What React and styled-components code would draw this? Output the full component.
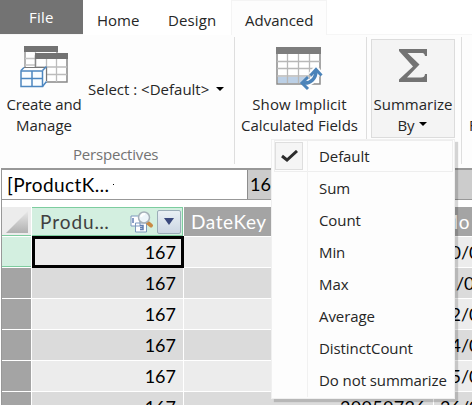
import React from "react";
import styled, { createGlobalStyle } from "styled-components";

const Global = createGlobalStyle`
  * { box-sizing: border-box; }
  body { margin: 0; overflow: hidden; background: #fff; }
`;

const Window = styled.div`
  position: relative;
  width: 472px;
  height: 405px;
  overflow: hidden;
  font: 15px/21px "Open Sans", "Noto Sans", sans-serif;
  color: #262626;
  background: #fff;
  white-space: nowrap;
`;

const Text = styled.span`
  font-size: ${(p) => p.$size || 15}px;
  letter-spacing: ${(p) => p.$track || 0}px;
`;

const TabBar = styled.nav`
  display: flex;
  height: 34px;
  background: #fff;
`;

const Tab = styled.div`
  width: ${(p) => p.$width}px;
  height: 35px;
  padding: 9px 0 0 ${(p) => p.$pad}px;
  background: ${(p) => (p.$active ? "#fdfdfd" : "#fff")};
  border: 1px solid ${(p) => (p.$active ? "#f4f4f4" : "#fff")};
  border-bottom: 0;
`;

const FileTab = styled.div`
  width: 83px;
  height: 34px;
  padding: 7px 0 0 29px;
  color: #fff;
  background: #737373;
`;

const Ribbon = styled.section`
  display: flex;
  height: 134px;
  background: #fdfdfd;
  border-top: 1px solid #f6f6f6;
`;

const Group = styled.div`
  width: ${(p) => p.$width}px;
  height: 127px;
  margin-top: 2px;
  flex: none;
  border-right: 1px solid #dedede;
`;

const GroupTools = styled.div`
  display: flex;
  height: 102px;
`;

const GroupName = styled.div`
  padding-left: 73px;
  margin-top: 5px;
  color: #737373;
`;

const Tool = styled.div`
  display: flex;
  flex-direction: column;
  align-items: center;
  width: ${(p) => p.$width}px;
  padding-top: 6px;
`;

const ToolIcon = styled.div`
  height: 51px;
  display: flex;
  align-items: flex-start;
  padding-top: ${(p) => p.$drop}px;
`;

const Selector = styled.div`
  display: flex;
  align-items: flex-start;
  padding-top: 42px;
`;

const Caret = styled.span`
  display: inline-block;
  width: 0;
  height: 0;
  margin: ${(p) => p.$margin || 0};
  border: 4px solid transparent;
  border-top-color: #000;
  border-bottom: 0;
`;

const SummaryButton = styled.div`
  width: 84px;
  height: 99px;
  margin: 2px 0 0 4px;
  display: flex;
  flex-direction: column;
  align-items: center;
  background: #f4f4f4;
  border: 1px solid #dcdcdc;
  padding-top: 3px;
`;

const ByLine = styled.div`
  display: flex;
  align-items: center;
  margin-left: -2px;
`;

const NextTool = styled.div`
  padding: 80px 0 0 7px;
`;

const FormulaBar = styled.div`
  display: flex;
  height: 32px;
  margin-left: 1px;
  border: 1px solid #989898;
  border-width: 2px 0 1px 1px;
  font: 18px/29px Lato, sans-serif;
  color: #000;
`;

const CellName = styled.div`
  width: 246px;
  padding-left: 5px;
  border-right: 1px solid #8d8d8d;
`;

const Dot = styled.span`
  display: inline-block;
  width: 1px;
  height: 1px;
  margin-left: 4px;
  vertical-align: 7px;
  background: #000;
`;

const Formula = styled.div`
  flex: 1;
  padding-left: 2px;
  background: #ccc;
`;

const Grid = styled.div`
  display: grid;
  grid-template-columns: 29px 151px 249px 38px;
  grid-template-rows: 29px;
  grid-auto-rows: 30px;
  gap: 1px;
  height: 205px;
  padding-top: 7px;
  margin-left: 1px;
  border-left: 1px solid #989898;
  background: #fff;
  font: 18px/31px Lato, sans-serif;
  color: #000;
`;

const Corner = styled.div`
  background: #ececec;
  border-bottom: 1px solid #7dcd9f;
  padding: 4px 3px;
  svg { display: block; }
`;

const ColumnHead = styled.div`
  display: flex;
  align-items: center;
  overflow: hidden;
  padding-left: ${(p) => (p.$selected ? 8 : 7)}px;
  color: ${(p) => (p.$selected ? "#404040" : "#fff")};
  background: ${(p) => (p.$selected ? "#d3efe0" : "#a4a4a4")};
  border: solid ${(p) => (p.$selected ? "#7dcd9f" : "#a4a4a4")};
  border-width: ${(p) => (p.$selected ? "1px 1px 1px 0" : "0")};
`;

const HeadName = styled.div`
  width: 90px;
  flex: none;
`;

const FilterButton = styled.div`
  width: 24px;
  height: 24px;
  margin-left: 3px;
  display: flex;
  align-items: center;
  justify-content: center;
  flex: none;
  border: 1px solid #9badb8;
  border-radius: 2px;
  background: linear-gradient(#e9f0f5, #ccd6e3);
`;

const RowHead = styled.div`
  background: ${(p) => (p.$selected ? "#d3efe0" : "#a4a4a4")};
  border-bottom: ${(p) => (p.$selected ? "1px solid #7dcd9f" : "0")};
`;

const Cell = styled.div`
  overflow: hidden;
  text-align: ${(p) => p.$align || "right"};
  padding: 0 7px 0 6px;
  background: ${(p) => (p.$odd ? "#dbdbdb" : "#ececec")};
`;

const SelectedCell = styled(Cell)`
  margin: -1px -1px -1px 0;
  padding: 0 5px 0 3px;
  border: 3px solid #000;
  line-height: 27px;
  z-index: 1;
`;

const DateText = styled.span`
  margin-left: ${(p) => p.$shift}px;
`;

const Menu = styled.div`
  position: absolute;
  z-index: 5;
  left: 271px;
  top: 139px;
  width: 184px;
  height: 260px;
  padding: 0 1px 0 2px;
  background: #fdfdfd;
  border: 1px solid #f0f0f0;
  box-shadow: 3px 3px 1px rgba(0, 0, 0, 0.16);
`;

const MenuItem = styled.div`
  display: flex;
  height: 32px;
  background: #fdfdfd;
  border: 1px solid ${(p) => (p.$active ? "#eeeeee" : "transparent")};
`;

const Check = styled.div`
  width: 28px;
  height: 28px;
  margin: 1px 0 0 0;
  display: flex;
  align-items: center;
  justify-content: center;
  background: ${(p) => (p.$on ? "#f5f5f5" : "transparent")};
  border: 1px solid ${(p) => (p.$on ? "#dedede" : "transparent")};
`;

const MenuLabel = styled.div`
  height: 32px;
  margin-left: 4px;
  padding: 5px 0 0 11px;
  border-left: 1px solid #f1f1f1;
`;

const PerspectivesIcon = () => (
  <svg width="48" height="42" viewBox="0 0 48 42">
    <path fill="#fff" stroke="#999" strokeWidth="1.5" d="M5 5h32v23H5z" />
    <path fill="none" stroke="#c4c4c4" strokeWidth="1.3" d="M5 12.5h11M5 19h11M15.5 6v16" />
    <path fill="#737373" d="M4 0h34v6H4z" />
    <path fill="#fff" stroke="#888" strokeWidth="1.5" d="M15.5 10h31.5v26h-31.5z" />
    <path fill="none" stroke="#bcbcbc" strokeWidth="1.3" d="M26.5 13v23M36.5 13v23M16 21h31M16 28.5h31" />
    <path fill="#737373" d="M15 7h33v6H15z" />
    <path fill="#fff" d="m1 25 4-4h22v14l-4 5z" />
    <path fill="none" stroke="#777" strokeWidth="1.2" d="M4 21.500h22.500V35" />
    <path fill="#fafdff" stroke="#4d87c0" strokeWidth="1.5" d="M1 25h21.500v15.500H1z" />
    <path fill="none" stroke="#4d87c0" strokeWidth="1.5" d="M12 25v15.500M1 32.500h21.500M1 24.500l3-3M22.500 24.500l4-4M22.500 40.500l4-5" />
  </svg>
);

const ImplicitIcon = () => (
  <svg width="48" height="45" viewBox="0 0 48 45">
    <path fill="#fff" stroke="#8a8a8a" strokeWidth="1.5" d="M1 2h43v36H1z" />
    <path fill="#bcd0e6" d="M2 31h29v6H2z" />
    <path fill="none" stroke="#b8b8b8" strokeWidth="1.3" d="M11.500 8v29M22.500 8v29M33.500 8v29M1 15.500h43M1 22.500h43M1 30h43" />
    <path fill="#7d7d7d" d="M0 1h45v7H0z" />
    <path fill="none" stroke="#fdfdfd" strokeWidth="6" d="M28 37c8 1 12-5 12-12M35 29l5-6 5 6" />
    <path fill="none" stroke="#4b83b9" strokeWidth="3.500" d="M27 37c8 1 13-5 13-12" />
    <path fill="none" stroke="#4b83b9" strokeWidth="3" d="m34.500 29.500 5.500-6 5.500 6M32 31l-6 6 6 6" />
  </svg>
);

const SigmaIcon = () => (
  <svg width="28" height="33" viewBox="0 0 28 33">
    <path fill="#737373" d="M0 0h28v7h-2c-.5-2.500-1.500-3-4-3H8.500l12 11.500L8 28.500h14c2.700 0 3.600-.8 4-3.500h2v8H0v-2.500l14-13L0 2z" />
  </svg>
);

const SearchIcon = () => (
  <svg width="24" height="22" viewBox="0 0 24 22">
    <path fill="#fff" stroke="#7b98bd" d="M1 5h9v10H1zM5.500 12h11v9h-11z" />
    <path fill="none" stroke="#617fb2" strokeWidth="1.5" d="M3 7v5M10 14.500h3v4h-3M10 16.500h3" />
    <path stroke="#c98a44" strokeWidth="4" strokeLinecap="round" d="m18 12 3 2.500" />
    <circle cx="14" cy="6.500" r="5.500" fill="#edf5fa" stroke="#a5b0b8" strokeWidth="1.5" />
    <path fill="none" stroke="#fff" strokeWidth="2" d="M11 6c.5-2 2-3 4-3" />
  </svg>
);

const rows = [
  ["", "20/0", 0],
  ["", "21/0", -5],
  ["", "22/0", 0],
  ["", "24/0", 0],
  ["", "25/0", 0],
  ["20050726", "26/0", 0],
];

const options = [
  "Default",
  "Sum",
  "Count",
  "Min",
  "Max",
  "Average",
  "DistinctCount",
  "Do not summarize",
];

export default function App() {
  return (
    <Window>
      <Global />
      <TabBar>
        <FileTab><Text $track={0.2}>File</Text></FileTab>
        <Tab $width={72} $pad={13}><Text>Home</Text></Tab>
        <Tab $width={76} $pad={12}><Text $track={0.1}>Design</Text></Tab>
        <Tab $width={96} $pad={13} $active><Text>Advanced</Text></Tab>
      </TabBar>
      <Ribbon>
        <Group $width={235}>
          <GroupTools>
            <Tool $width={88}>
              <ToolIcon $drop={3}><PerspectivesIcon /></ToolIcon>
              <Text $track={-0.15}>Create and</Text>
              <Text>Manage</Text>
            </Tool>
            <Selector>
              <Text>Select : &lt;Default&gt;</Text>
              <Caret $margin="8px 0 0 7px" />
            </Selector>
          </GroupTools>
          <GroupName><Text $track={-0.2}>Perspectives</Text></GroupName>
        </Group>
        <Group $width={132}>
          <Tool $width={129}>
            <ToolIcon $drop={3}><ImplicitIcon /></ToolIcon>
            <Text $track={0.1}>Show Implicit</Text>
            <Text>Calculated Fields</Text>
          </Tool>
        </Group>
        <Group $width={95}>
          <SummaryButton>
            <ToolIcon $drop={6}><SigmaIcon /></ToolIcon>
            <Text>Summarize</Text>
            <ByLine><Text>By</Text><Caret $margin="0 0 3px 4px" /></ByLine>
          </SummaryButton>
        </Group>
        <NextTool><Text>F</Text></NextTool>
      </Ribbon>
      <FormulaBar>
        <CellName><Text $size={19} $track={0.4}>[ProductK…</Text><Dot /></CellName>
        <Formula>167</Formula>
      </FormulaBar>
      <Grid>
        <Corner>
          <svg width="23" height="22" viewBox="0 0 23 22">
            <defs>
              <linearGradient id="cornerShade" x1="0" y1="0" x2="0" y2="1">
                <stop offset="0" stopColor="#e8e8e8" />
                <stop offset="1" stopColor="#b0b0b0" />
              </linearGradient>
            </defs>
            <path fill="url(#cornerShade)" d="M23 0v22H1z" />
          </svg>
        </Corner>
        <ColumnHead $selected>
          <HeadName><Text $size={19} $track={0.95}>Produ…</Text></HeadName>
          <SearchIcon />
          <FilterButton>
            <svg width="10" height="7" viewBox="0 0 10 7"><path fill="#39477c" d="M0 0h10L5 7z" /></svg>
          </FilterButton>
        </ColumnHead>
        <ColumnHead><Text $size={19} $track={0.6}>DateKey</Text></ColumnHead>
        <ColumnHead><Text $size={19} $track={0.3}>Mo</Text></ColumnHead>
        {rows.map(([key, date, shift], i) => (
          <React.Fragment key={date}>
            <RowHead $selected={i === 0} />
            {i === 0 ? <SelectedCell>167</SelectedCell> : <Cell $odd={i % 2}>167</Cell>}
            <Cell $odd={i % 2}><Text $size={18} $track={0.3}>{key}</Text></Cell>
            <Cell $odd={i % 2} $align="left"><DateText $shift={shift}>{date}</DateText></Cell>
          </React.Fragment>
        ))}
      </Grid>
      <Menu>
        {options.map((label, i) => (
          <MenuItem key={label} $active={i === 0}>
            <Check $on={i === 0}>
              {i === 0 && (
                <svg width="17" height="12" viewBox="0 0 17 12">
                  <path fill="none" stroke="#2b2b2b" strokeWidth="3" d="m1 6 5 4L16 1" />
                </svg>
              )}
            </Check>
            <MenuLabel><Text $track={-0.08}>{label}</Text></MenuLabel>
          </MenuItem>
        ))}
      </Menu>
    </Window>
  );
}
